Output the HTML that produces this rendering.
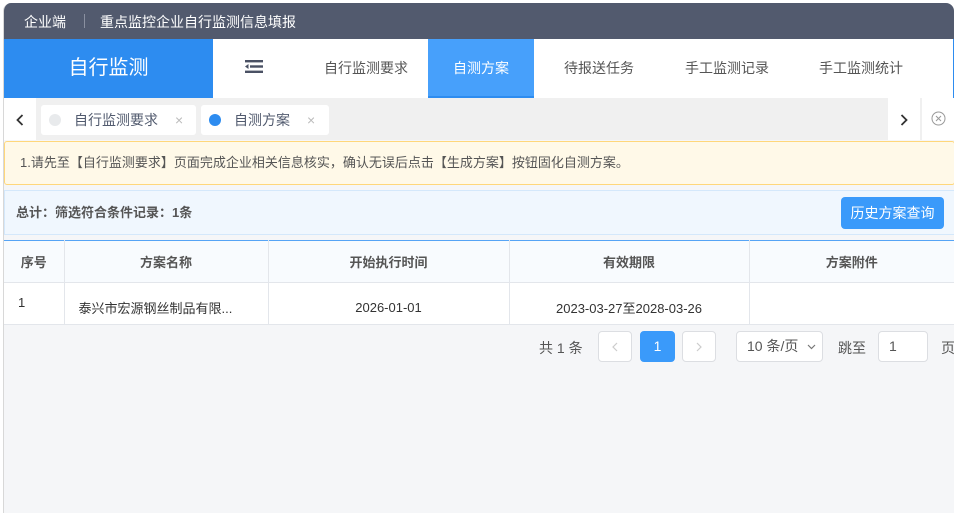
<!DOCTYPE html>
<html><head><meta charset="utf-8"><style>
*{margin:0;padding:0;box-sizing:border-box}
body{width:954px;height:513px;overflow:hidden;background:#fff;font-family:"Liberation Sans","Noto Sans CJK SC",sans-serif;position:relative}
.a{position:absolute}
.frame{left:3px;top:3px;width:951px;height:510px;background:#f5f6f8;border-left:1px solid #d8d8d8;border-radius:8px 8px 0 0;overflow:hidden}
.hdr{left:0;top:0;width:951px;height:36px;background:#525a6e;color:#fff;font-size:14px}
.nav{left:0;top:36px;width:951px;height:59px;background:#fff;border-right:2px solid #2d8cf0}
.nav span{position:absolute;top:0;line-height:59px;font-size:14px;color:#555}
.tabs{left:0;top:95px;width:951px;height:42px;background:#f0f0f0}
.tab{position:absolute;top:7px;height:30px;background:#fff;border-radius:3px;font-size:14px;color:#515a6e;line-height:30px}
.dot{position:absolute;left:8px;top:9px;width:12px;height:12px;border-radius:50%}
th,td{border-right:1px solid #e3e6eb;border-bottom:1px solid #e3e6eb;font-size:13px;color:#333;text-align:center}
th{height:42px;background:#f8fbfe;font-weight:bold;color:#555}
td{height:42px;background:#fff}
.pg{position:absolute;top:328px;height:31px;border:1px solid #dcdee2;border-radius:4px;background:#fff;font-size:14px;color:#555;line-height:29px;text-align:center}
</style></head><body>
<div class="a frame">
 <div class="a hdr"><span class="a" style="left:20px;top:9px">企业端</span><span class="a" style="left:80px;top:11px;width:1px;height:14px;background:#8a90a0"></span><span class="a" style="left:96px;top:9px">重点监控企业自行监测信息填报</span></div>
 <div class="a nav">
  <div class="a" style="left:0;top:0;width:209px;height:59px;background:#2d8cf0;color:#fff;font-size:20px;text-align:center;line-height:59px">自行监测</div>
  <svg class="a" style="left:241px;top:21px" width="18" height="13" viewBox="0 0 18 13"><rect x="0" y="0" width="18" height="2.4" fill="#4a5164"/><rect x="5" y="5.3" width="13" height="2.4" fill="#4a5164"/><rect x="0" y="10.6" width="18" height="2.4" fill="#4a5164"/><path d="M0 6.5L3.5 4V9Z" fill="#4a5164"/></svg>
  <span style="left:320px">自行监测要求</span>
  <div class="a" style="left:424px;top:0;width:106px;height:59px;background:#47a0fb;border-bottom:2px solid #2d8cf0;color:#fff;font-size:14px;text-align:center;line-height:59px">自测方案</div>
  <span style="left:560px">待报送任务</span>
  <span style="left:681px">手工监测记录</span>
  <span style="left:815px">手工监测统计</span>
 </div>
 <div class="a tabs">
  <div class="a" style="left:0;top:0;width:32px;height:42px;background:#fff"><svg class="a" style="left:12px;top:16px" width="8" height="12"><path d="M6.5 1L1.5 6L6.5 11" fill="none" stroke="#333" stroke-width="1.8"/></svg></div>
  <div class="tab" style="left:37px;width:155px"><div class="dot" style="background:#e8eaec"></div><span class="a" style="left:33px">自行监测要求</span><span class="a" style="left:134px;color:#bbb">×</span></div>
  <div class="tab" style="left:197px;width:128px"><div class="dot" style="background:#2d8cf0"></div><span class="a" style="left:33px">自测方案</span><span class="a" style="left:106px;color:#bbb">×</span></div>
  <div class="a" style="left:884px;top:0;width:32px;height:42px;background:#fff"><svg class="a" style="left:12px;top:16px" width="8" height="12"><path d="M1.5 1L6.5 6L1.5 11" fill="none" stroke="#333" stroke-width="1.8"/></svg></div>
  <div class="a" style="left:918px;top:0;width:33px;height:42px;background:#fff"><svg class="a" style="left:9px;top:13px" width="15" height="15"><circle cx="7.5" cy="7.5" r="6.5" fill="none" stroke="#999"/><path d="M5 5L10 10M10 5L5 10" stroke="#999"/></svg></div>
 </div>
 <div class="a" style="left:0;top:138px;width:951px;height:44px;background:#fff9e8;border:1px solid #ffd77a;border-radius:3px;font-size:13px;color:#555;line-height:42px;padding-left:15px">1.请先至【自行监测要求】页面完成企业相关信息核实，确认无误后点击【生成方案】按钮固化自测方案。</div>
 <div class="a" style="left:0;top:187px;width:951px;height:45px;background:#f0f7fe;border:1px solid #d4e8fb;font-size:13px;font-weight:bold;color:#555;line-height:43px;padding-left:11px">总计：筛选符合条件记录：1条
  <div class="a" style="left:836px;top:6px;width:103px;height:32px;background:#3a9afa;border-radius:4px;color:#fff;font-weight:normal;font-size:14px;line-height:32px;text-align:center">历史方案查询</div></div>
 <table class="a" style="left:0;top:237px;width:951px;border-collapse:collapse;border-top:1px solid #56a4f5">
  <tr><th style="width:60px">序号</th><th style="width:204px">方案名称</th><th style="width:241px">开始执行时间</th><th style="width:240px">有效期限</th><th>方案附件</th></tr>
  <tr><td style="text-align:left;padding-left:14px;vertical-align:top;padding-top:12px">1</td><td style="padding-top:8px;text-align:left;padding-left:14px">泰兴市宏源钢丝制品有限...</td><td style="padding-top:8px">2026-01-01</td><td style="padding-top:8px">2023-03-27至2028-03-26</td><td></td></tr>
 </table>
 <span class="a" style="left:535px;top:335px;font-size:14px;color:#555">共 1 条</span>
 <div class="pg" style="left:594px;width:34px"><svg class="a" style="left:13px;top:10px" width="6" height="10"><path d="M5 1L1 5L5 9" fill="none" stroke="#ccc" stroke-width="1.2"/></svg></div>
 <div class="pg" style="left:636px;width:35px;background:#3a9afa;border-color:#3a9afa;color:#fff">1</div>
 <div class="pg" style="left:678px;width:34px"><svg class="a" style="left:13px;top:10px" width="6" height="10"><path d="M1 1L5 5L1 9" fill="none" stroke="#ccc" stroke-width="1.2"/></svg></div>
 <div class="pg" style="left:732px;width:87px;text-align:left;padding-left:10px">10 条/页<svg class="a" style="left:70px;top:12px" width="9" height="6"><path d="M1 1L4.5 4.5L8 1" fill="none" stroke="#777" stroke-width="1.2"/></svg></div>
 <span class="a" style="left:834px;top:335px;font-size:14px;color:#555">跳至</span>
 <div class="pg" style="left:874px;width:50px;text-align:left;padding-left:10px">1</div>
 <span class="a" style="left:937px;top:335px;font-size:14px;color:#555">页</span>
</div>
</body></html>
